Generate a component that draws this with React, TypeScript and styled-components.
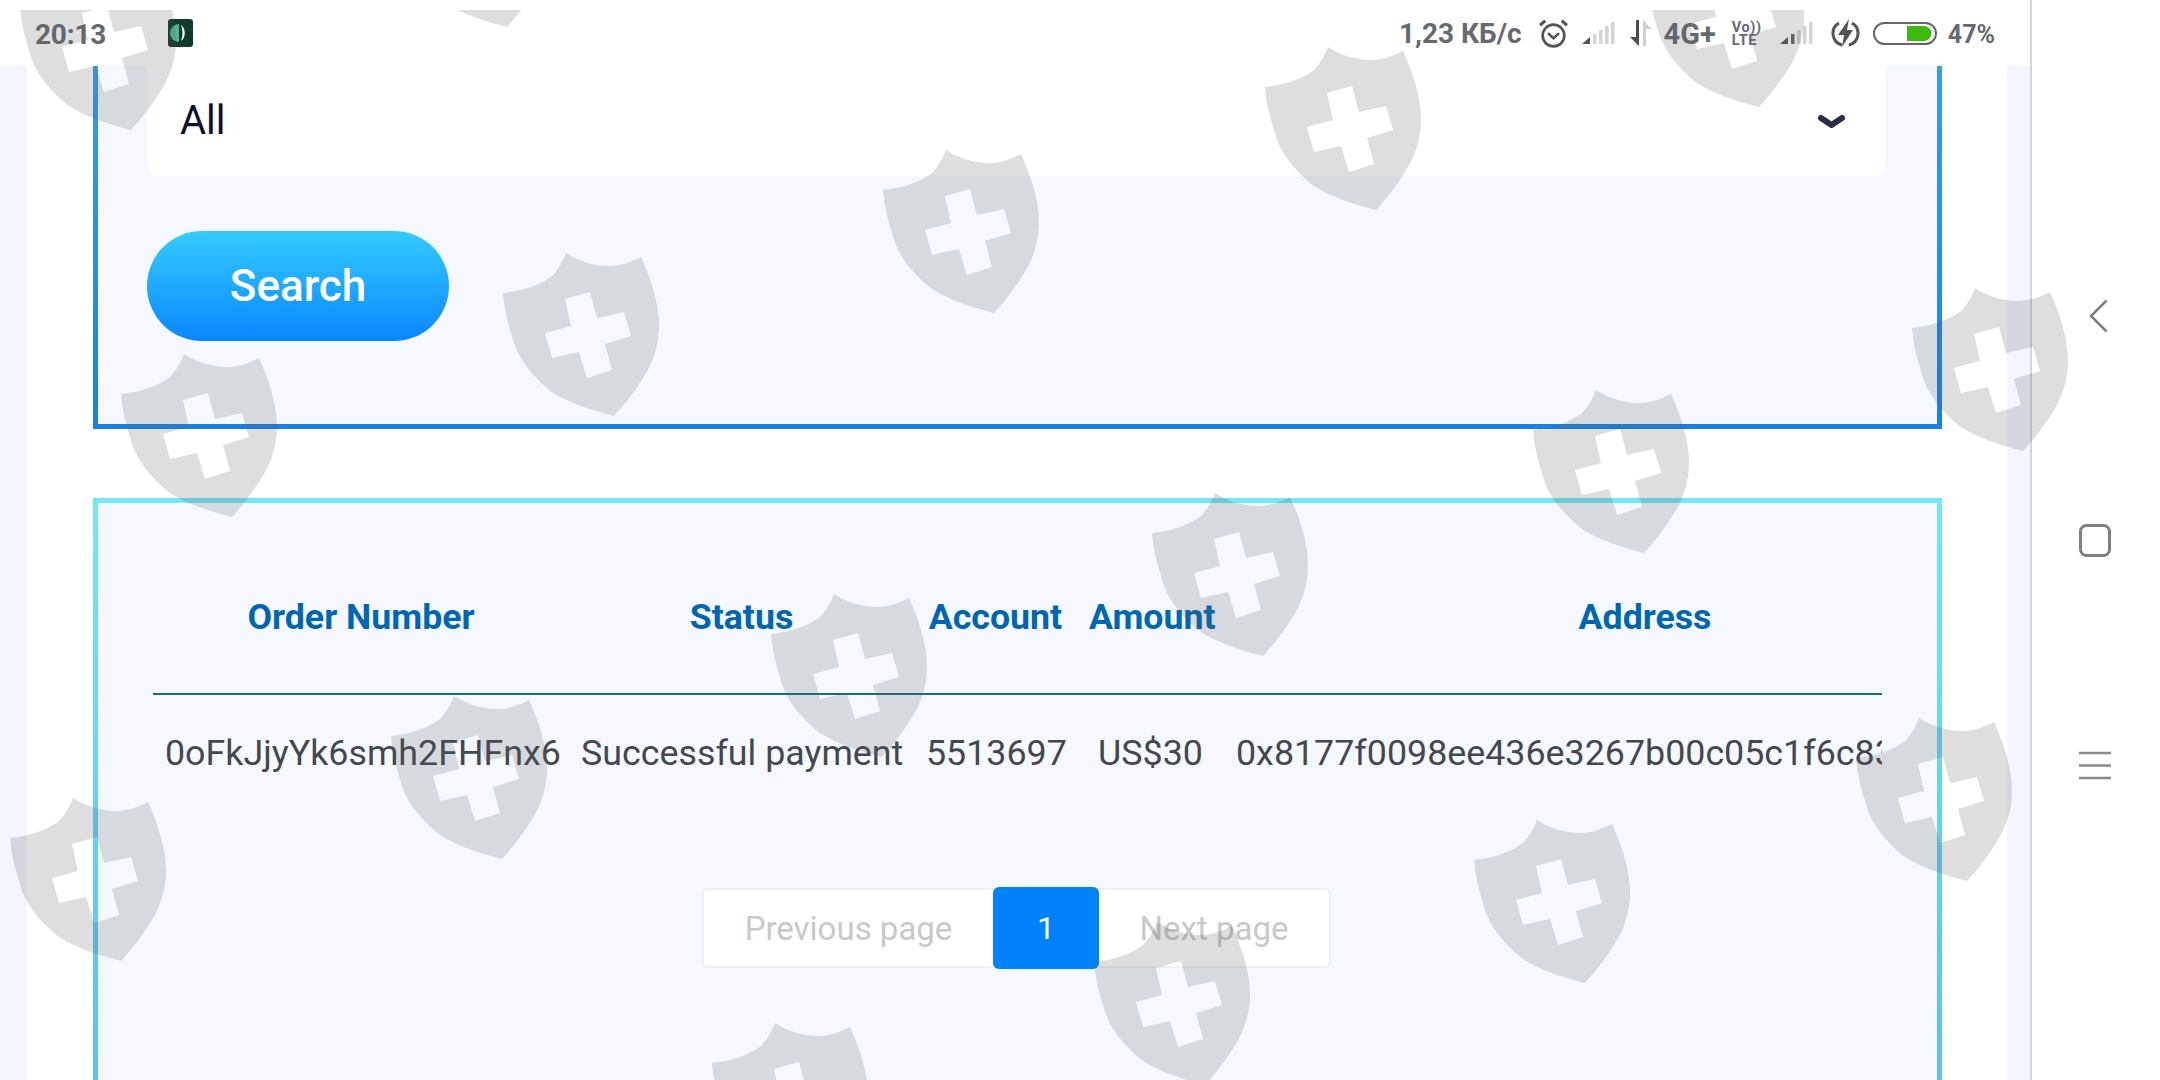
import React from "react";
import styled, { createGlobalStyle } from "styled-components";

const Global = createGlobalStyle`
  html, body { margin: 0; padding: 0; background: #fff; }
  body { font-family: Roboto, "Liberation Sans", sans-serif; }
  * { box-sizing: border-box; }
`;

const Screen = styled.div`
  position: relative;
  display: flex;
  width: 2160px;
  height: 1080px;
  overflow: hidden;
  background: #fff;
`;
const Main = styled.div`
  display: flex;
  flex-direction: column;
  width: 2030px;
  height: 100%;
`;
const StatusBar = styled.div`
  display: flex;
  align-items: center;
  flex: 0 0 66px;
  padding: 0 35px 0 35px;
  background: #fff;
  color: #666a70;
`;
const Time = styled.span`
  width: 133px;
  padding-top: 2px;
  font-size: 28px;
  font-weight: 700;
  letter-spacing: -0.2px;
`;
const StatusRight = styled.div`
  display: flex;
  align-items: center;
  margin-left: auto;
`;
const StatusText = styled.span<{ $gap?: number; $size?: number }>`
  margin-left: ${(p) => p.$gap ?? 0}px;
  padding-top: 2px;
  font-size: ${(p) => p.$size ?? 28}px;
  font-weight: 700;
  white-space: nowrap;
  line-height: 1;
`;
const StatusIcon = styled.svg<{ $gap: number }>`
  display: block;
  flex: none;
  margin-left: ${(p) => p.$gap}px;
`;
const VoLte = styled.span`
  display: flex;
  flex-direction: column;
  width: 31px;
  margin-left: 16px;
  padding-top: 2px;
  font-size: 14.5px;
  font-weight: 700;
  line-height: 13px;
  letter-spacing: 0.6px;
  text-align: left;
  white-space: nowrap;
`;
const Page = styled.div`
  flex: 1;
  min-height: 0;
  overflow: hidden;
  padding: 0 23px 0 27px;
  background: #f3f6ff;
`;
const Sheet = styled.div`
  height: 100%;
  padding: 0 65px 0 66px;
  background: #fff;
`;
const SearchPanel = styled.section`
  height: 363px;
  padding: 0 51px 0 49px;
  border: 5px solid;
  border-top: 0;
  border-image: linear-gradient(180deg, #3a9de5, #1a81e4) 1;
  background: #f5f9ff;
`;
const Select = styled.div`
  display: flex;
  align-items: center;
  justify-content: space-between;
  height: 110px;
  padding: 0 41px 0 33px;
  border-radius: 0 0 12px 12px;
  background: #fff;
  color: #0b1030;
  font-size: 40px;
`;
const SelectLabel = styled.span`
  margin-top: -1px;
`;
const Caret = styled.svg`
  display: block;
  margin-top: 2px;
`;
const SearchButton = styled.button`
  display: block;
  width: 302px;
  height: 110px;
  margin-top: 55px;
  padding: 0;
  border: 0;
  border-radius: 55px;
  background: linear-gradient(180deg, #33ccff, #0a86ff);
  color: #fff;
  font-family: inherit;
  font-size: 44px;
  font-weight: 500;
`;
const ResultPanel = styled.section`
  height: 700px;
  margin-top: 69px;
  padding: 38px 55px 0;
  border: 5px solid;
  border-image: linear-gradient(180deg, #74e6f6, #5bbdee 90%) 1;
  background: #f5f9ff;
`;
const TableClip = styled.div`
  overflow: hidden;
`;
const Row = styled.div<{ $head?: boolean }>`
  display: grid;
  grid-template-columns: 416px 345px 163px 147px 842px;
  align-items: center;
  width: 1913px;
  height: ${(p) => (p.$head ? 152 : 116)}px;
`;
const HeadCell = styled.div`
  padding: 0 12px;
  color: #0066b3;
  font-size: 35.7px;
  font-weight: 700;
  text-align: center;
  white-space: nowrap;
`;
const BodyCell = styled.div<{ $left?: boolean }>`
  padding: 0 12px;
  color: #44474f;
  font-size: 35.8px;
  text-align: ${(p) => (p.$left ? "left" : "center")};
  white-space: nowrap;
`;
const Rule = styled.div`
  height: 2px;
  background: #1d6788;
`;
const Pager = styled.nav`
  display: flex;
  align-items: center;
  justify-content: center;
  margin-top: 76px;
  padding-right: 2px;
`;
const PageLink = styled.div<{ $width: number; $side: "left" | "right" }>`
  display: flex;
  align-items: center;
  justify-content: center;
  width: ${(p) => p.$width}px;
  height: 80px;
  border: 2px solid #eef0f4;
  border-${(p) => (p.$side === "left" ? "right" : "left")}: 0;
  border-radius: ${(p) => (p.$side === "left" ? "6px 0 0 6px" : "0 6px 6px 0")};
  background: #fff;
  color: #c9c9c9;
  font-size: 33px;
`;
const PageCurrent = styled.div`
  display: flex;
  align-items: center;
  justify-content: center;
  width: 106px;
  height: 82px;
  border-radius: 6px;
  background: #0082fa;
  color: #fff;
  font-size: 32px;
`;
const Divider = styled.div`
  flex: 0 0 2px;
  background: #d2d5db;
`;
const NavBar = styled.div`
  display: flex;
  flex: 1;
  flex-direction: column;
  align-items: center;
  padding: 299px 48px 0 46px;
  background: #fff;
`;
const NavIcon = styled.svg<{ $top: number; $shift?: number }>`
  display: block;
  flex: none;
  margin-top: ${(p) => p.$top}px;
  margin-left: ${(p) => p.$shift ?? 0}px;
`;
const Watermarks = styled.div`
  position: absolute;
  inset: 10px 0 0 0;
  overflow: hidden;
  pointer-events: none;
`;
const Mark = styled.svg<{ $x: number; $y: number }>`
  position: absolute;
  left: ${(p) => p.$x}px;
  top: ${(p) => p.$y - 10}px;
  width: 157px;
  height: 164px;
`;

const shieldPath =
  "M0 40C18 38 36 33 49 23C55 17 60 8 63 0C72 6 88 13 106 13C118 13 128 9 138 4C148 26 156 50 156 73C156 92 150 110 140 125C132 138 122 151 111 163C88 157 66 150 49 139C30 124 14 105 9 83C4 68 1 54 0 40Z" +
  "M62 46L87 39L94 65L121 59L128 83L102 91L109 117L84 125L76 99L49 105L42 80L68 73Z";

const marks: [number, number][] = [
  [20, -33], [396, -136], [1265, 47], [883, 150], [503, 253], [121, 354],
  [1648, -56], [1912, 288], [1533, 390], [1152, 493], [771, 594], [391, 696],
  [10, 798], [1856, 718], [1474, 820], [1094, 922], [712, 1023],
];

function Signal({ gap, dark }: { gap: number; dark: number }) {
  const bars = [0, 1, 2, 3];
  return (
    <StatusIcon $gap={gap} width="34" height="22" viewBox="0 0 34 22">
      <path d="M0 22L8 15V22Z" fill="#555" />
      {bars.map((b) => (
        <rect
          key={b}
          x={11 + b * 6}
          y={12 - b * 4}
          width="3.5"
          height={10 + b * 4}
          fill={b < dark ? "#666" : "#d4d4d4"}
        />
      ))}
    </StatusIcon>
  );
}

export default function App() {
  return (
    <>
      <Global />
      <Screen>
        <Main>
          <StatusBar>
            <Time>20:13</Time>
            <svg width="25" height="28" viewBox="0 0 25 28">
              <rect width="25" height="28" rx="3" fill="#0f3b2e" />
              <path d="M11 5A9 9 0 0 0 11 23Z" fill="#52b98e" />
              <path d="M13 6C18 9 18 19 13 22C15 17 15 11 13 6Z" fill="#fff" />
            </svg>
            <StatusRight>
              <StatusText>1,23 КБ/с</StatusText>
              <StatusIcon $gap={16} width="31" height="31" viewBox="0 0 30 30" fill="none" stroke="#555" strokeWidth="2.6">
                <circle cx="15" cy="17" r="10.5" />
                <path d="M10.5 15.5L15 19.5L19.5 15.5" strokeLinecap="round" />
                <path d="M2 7L7 2.5M28 7L23 2.5" strokeWidth="3" />
              </StatusIcon>
              <Signal gap={13} dark={0} />
              <StatusIcon $gap={13} width="24" height="26" viewBox="0 0 24 26">
                <path d="M7 0H10V26L1 17H7Z" fill="#4c4c4c" />
                <path d="M14 26V0L23 9H17V26Z" fill="#d0d0d0" />
              </StatusIcon>
              <StatusText $gap={11} $size={29}>4G+</StatusText>
              <VoLte>
                <span>Vo))</span>
                <span>LTE</span>
              </VoLte>
              <Signal gap={17} dark={1} />
              <StatusIcon $gap={17} width="29" height="30" viewBox="0 0 29 30" fill="none">
                <path d="M8 5A12 12 0 0 0 11 27M21 5A12 12 0 0 1 18 27" stroke="#555" strokeWidth="3" />
                <path d="M18 1L7 17H13L11 29L22 12H16Z" fill="#555" />
              </StatusIcon>
              <StatusIcon $gap={13} width="64" height="23" viewBox="0 0 64 23">
                <rect x="1" y="1" width="62" height="21" rx="10.5" fill="#fff" stroke="#666" strokeWidth="2" />
                <path d="M34 4H51A7.5 7.5 0 0 1 51 19H34Z" fill="#3dbb10" />
              </StatusIcon>
              <StatusText $gap={11} $size={25}>47%</StatusText>
            </StatusRight>
          </StatusBar>
          <Page>
            <Sheet>
              <SearchPanel>
                <Select>
                  <SelectLabel>All</SelectLabel>
                  <Caret width="27" height="14" viewBox="0 0 27 14" fill="none">
                    <path d="M3 3L13.5 10L24 3" stroke="#2a2f45" strokeWidth="6" strokeLinecap="round" strokeLinejoin="round" />
                  </Caret>
                </Select>
                <SearchButton>Search</SearchButton>
              </SearchPanel>
              <ResultPanel>
                <TableClip>
                  <Row $head>
                    <HeadCell>Order Number</HeadCell>
                    <HeadCell>Status</HeadCell>
                    <HeadCell>Account</HeadCell>
                    <HeadCell>Amount</HeadCell>
                    <HeadCell>Address</HeadCell>
                  </Row>
                  <Rule />
                  <Row>
                    <BodyCell>0oFkJjyYk6smh2FHFnx6</BodyCell>
                    <BodyCell>Successful payment</BodyCell>
                    <BodyCell>5513697</BodyCell>
                    <BodyCell>US$30</BodyCell>
                    <BodyCell $left>0x8177f0098ee436e3267b00c05c1f6c83</BodyCell>
                  </Row>
                </TableClip>
                <Pager>
                  <PageLink $width={291} $side="left">Previous page</PageLink>
                  <PageCurrent>1</PageCurrent>
                  <PageLink $width={232} $side="right">Next page</PageLink>
                </Pager>
              </ResultPanel>
            </Sheet>
          </Page>
        </Main>
        <Divider />
        <NavBar>
          <NavIcon $top={0} $shift={6} width="19" height="34" viewBox="0 0 19 34" fill="none" stroke="#808080" strokeWidth="2.6">
            <path d="M17.5 1.5L2 17L17.5 32.5" />
          </NavIcon>
          <NavIcon $top={191} width="32" height="33" viewBox="0 0 32 33" fill="none" stroke="#808080" strokeWidth="3">
            <rect x="1.5" y="1.5" width="29" height="30" rx="6" />
          </NavIcon>
          <NavIcon $top={194} width="32" height="29" viewBox="0 0 32 29" fill="none" stroke="#8a8a8a" strokeWidth="2.6">
            <path d="M0 2H32M0 14.5H32M0 27H32" />
          </NavIcon>
        </NavBar>
        <Watermarks>
          {marks.map(([x, y]) => (
            <Mark key={`${x}-${y}`} $x={x} $y={y} viewBox="0 0 157 164">
              <path d={shieldPath} fill="rgba(90,90,90,0.2)" fillRule="evenodd" />
            </Mark>
          ))}
        </Watermarks>
      </Screen>
    </>
  );
}
